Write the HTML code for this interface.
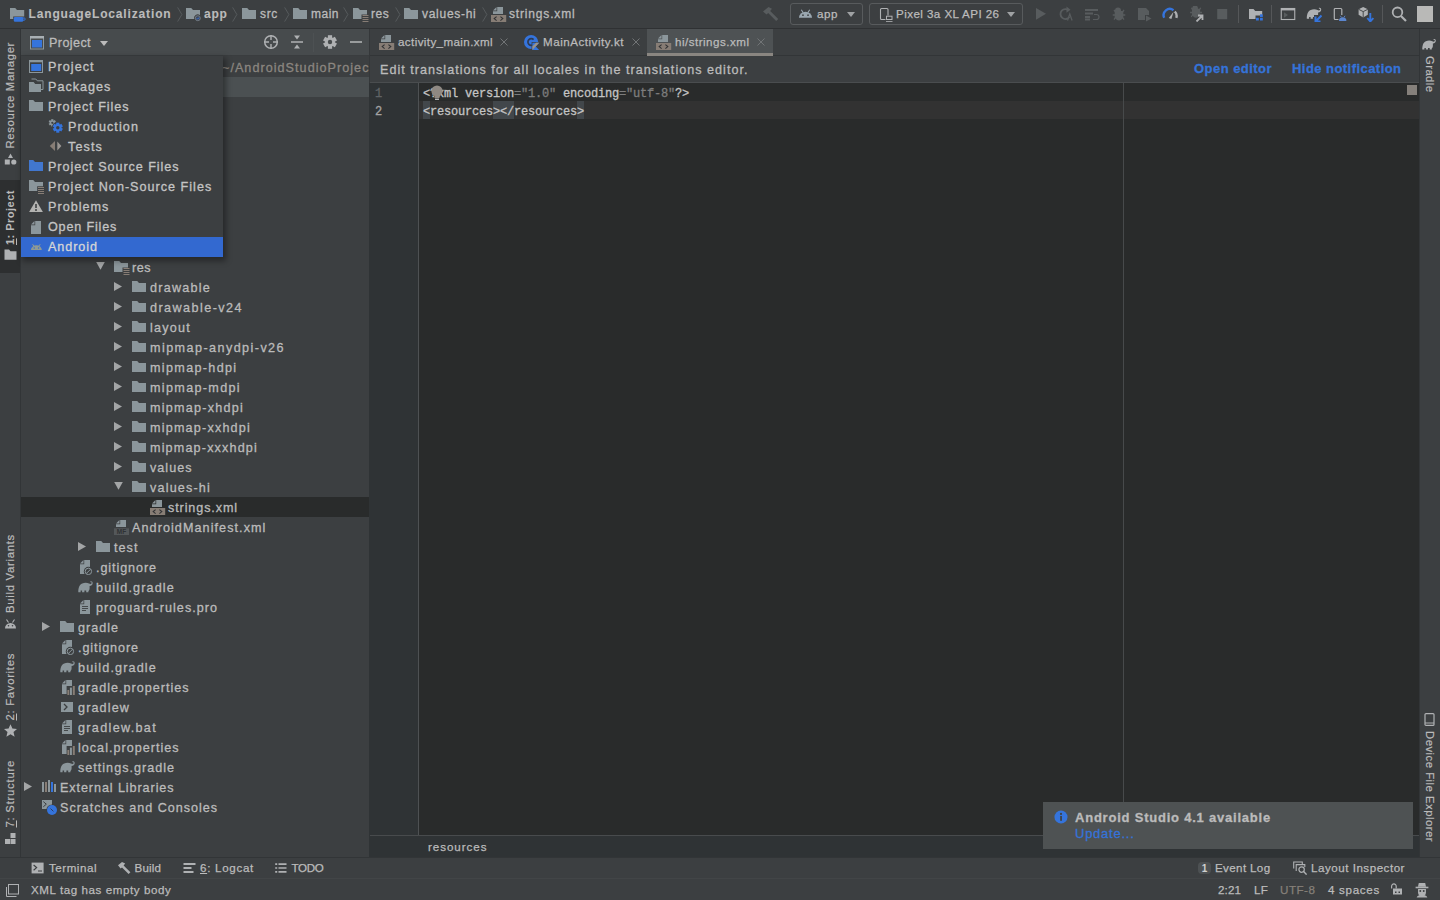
<!DOCTYPE html>
<html><head><meta charset="utf-8"><title>Android Studio</title>
<style>
html,body{margin:0;padding:0}
body{width:1440px;height:900px;overflow:hidden;position:relative;background:#3c3f41;font-family:"Liberation Sans",sans-serif;font-size:14px;color:#bbbbbb}
div,span{box-sizing:border-box}
.abs{position:absolute}
.ic{position:absolute;display:block}
.ic svg{display:block;width:100%;height:100%}
.t{-webkit-text-stroke:0.3px;position:absolute;white-space:nowrap;height:20px;line-height:22px;font-size:12.6px;letter-spacing:0.9px;color:#bbbbbb}
.s{-webkit-text-stroke:0.25px;position:absolute;white-space:nowrap;height:20px;line-height:20px;font-size:11.6px;letter-spacing:0.5px;color:#bbbbbb}
.b{font-weight:bold}
.v{-webkit-text-stroke:0.2px;position:absolute;white-space:nowrap;font-size:11.3px;line-height:20px;color:#bbbbbb}
.code{-webkit-text-stroke:0.3px;position:absolute;white-space:pre;font-family:"Liberation Mono",monospace;font-size:12px;letter-spacing:-0.2px;line-height:18px;height:18px;color:#c4c4c4}
.hl{background:#42474b;display:inline-block;height:18px;margin-top:-2px;padding-top:2px;vertical-align:top}
.dim{color:#7d7d7d}
.link{color:#3574dc}
</style></head>
<body>
<div class="abs" style="left:0;top:0;width:1440px;height:28px;background:#3c3f41"></div>
<div class="abs" style="left:0;top:28px;width:1440px;height:1px;background:#2f3133"></div>
<span class="ic" style="left:10px;top:6px;width:16px;height:16px;"><svg viewBox="0 0 16 16"><path d="M0 2h5.2l1.8 2h7.2v6.5H3.2v2.5H0z" fill="#8b969b"/><rect x="3.8" y="11" width="9.4" height="4.8" rx="1.2" fill="#3574dc"/><rect x="12.2" y="12" width="2.8" height="2.2" rx=".6" fill="none" stroke="#3574dc" stroke-width="1"/></svg></span>
<span class="t b" style="left:28.5px;top:3px;font-size:12px;-webkit-text-stroke:0.1px;letter-spacing:0.849px;">LanguageLocalization</span>
<span class="ic" style="left:186px;top:6px;width:16px;height:16px;"><svg viewBox="0 0 16 16"><path d="M0 2h5.2l1.8 2h7v5.2A3.6 3.6 0 0 0 8.2 13H0z" fill="#8b969b"/><circle cx="11.8" cy="12.2" r="2.5" fill="#3f4a5e" stroke="#7d858b" stroke-width=".8"/><path d="M10.8 12.3l.9.9 1.3-1.7" stroke="#3574dc" stroke-width=".9" fill="none"/></svg></span>
<span class="t b" style="left:204px;top:3px;font-size:12px;-webkit-text-stroke:0.1px;letter-spacing:0.719px;">app</span>
<span class="ic" style="left:242px;top:6px;width:16px;height:16px;"><svg viewBox="0 0 16 16"><path d="M0 2h5.2l1.8 2h7v9H0z" fill="#8b969b"/></svg></span>
<span class="t" style="left:260px;top:3px;font-size:12px;letter-spacing:0.667px;">src</span>
<span class="ic" style="left:293px;top:6px;width:16px;height:16px;"><svg viewBox="0 0 16 16"><path d="M0 2h5.2l1.8 2h7v9H0z" fill="#8b969b"/></svg></span>
<span class="t" style="left:311px;top:3px;font-size:12px;letter-spacing:0.496px;">main</span>
<span class="ic" style="left:353px;top:6px;width:16px;height:16px;"><svg viewBox="0 0 16 16"><path d="M0 2h5.2l1.8 2h7v4.5H8.5V13H0z" fill="#8b969b"/><path d="M9.5 9.5h6M9.5 11.5h6M9.5 13.5h6M9.5 15.5h6" stroke="#877d75" stroke-width="1" fill="none"/></svg></span>
<span class="t" style="left:371px;top:3px;font-size:12px;letter-spacing:0.543px;">res</span>
<span class="ic" style="left:404px;top:6px;width:16px;height:16px;"><svg viewBox="0 0 16 16"><path d="M0 2h5.2l1.8 2h7v9H0z" fill="#8b969b"/></svg></span>
<span class="t" style="left:422px;top:3px;font-size:12px;letter-spacing:0.719px;">values-hi</span>
<span class="ic" style="left:491px;top:6px;width:16px;height:16px;"><svg viewBox="0 0 16 16"><path d="M6.2 1H12V8H2V5.2H6.2z" fill="#8b969b"/><path d="M5.5 1V4.5H2z" fill="#8b969b"/><rect x="0" y="9" width="15.2" height="7.2" fill="#877d75"/><path d="M5.6 10.6L3.2 12.6l2.4 2M9.4 10.6l2.4 2-2.4 2" stroke="#313335" stroke-width="1.1" fill="none"/></svg></span>
<span class="t" style="left:509px;top:3px;font-size:12px;letter-spacing:0.832px;">strings.xml</span>
<span class="ic" style="left:176px;top:5.5px;width:8px;height:17px;"><svg viewBox="0 0 8 18"><path d="M1.5 1.5l4.5 7.5-4.5 7.5" fill="none" stroke="#575b5d" stroke-width="1"/></svg></span>
<span class="ic" style="left:231px;top:5.5px;width:8px;height:17px;"><svg viewBox="0 0 8 18"><path d="M1.5 1.5l4.5 7.5-4.5 7.5" fill="none" stroke="#575b5d" stroke-width="1"/></svg></span>
<span class="ic" style="left:283px;top:5.5px;width:8px;height:17px;"><svg viewBox="0 0 8 18"><path d="M1.5 1.5l4.5 7.5-4.5 7.5" fill="none" stroke="#575b5d" stroke-width="1"/></svg></span>
<span class="ic" style="left:342px;top:5.5px;width:8px;height:17px;"><svg viewBox="0 0 8 18"><path d="M1.5 1.5l4.5 7.5-4.5 7.5" fill="none" stroke="#575b5d" stroke-width="1"/></svg></span>
<span class="ic" style="left:394px;top:5.5px;width:8px;height:17px;"><svg viewBox="0 0 8 18"><path d="M1.5 1.5l4.5 7.5-4.5 7.5" fill="none" stroke="#575b5d" stroke-width="1"/></svg></span>
<span class="ic" style="left:481px;top:5.5px;width:8px;height:17px;"><svg viewBox="0 0 8 18"><path d="M1.5 1.5l4.5 7.5-4.5 7.5" fill="none" stroke="#575b5d" stroke-width="1"/></svg></span>
<div class="abs" style="left:20px;top:29px;width:1px;height:828px;background:#323537"></div>
<div class="abs" style="left:0;top:180px;width:20px;height:93px;background:#2d2f30"></div>
<span class="v" style="left:0px;top:42px;width:20px;height:106.5px;writing-mode:vertical-rl;transform:rotate(180deg);letter-spacing:0.651px">Resource Manager</span>
<span class="ic" style="left:4px;top:153px;width:13px;height:13px;"><svg viewBox="0 0 13 13"><path d="M6.5 0.500L9 5H4z" fill="#afb1b3"/><rect x="0.8" y="6.5" width="5" height="5" fill="#afb1b3"/><circle cx="9.8" cy="9" r="2.6" fill="#afb1b3"/></svg></span>
<span class="v" style="left:0px;top:190px;width:20px;height:55px;writing-mode:vertical-rl;transform:rotate(180deg);font-weight:bold;-webkit-text-stroke:0;font-size:11.2px;letter-spacing:0.4px"><u>1</u>: Project</span>
<span class="ic" style="left:4px;top:248px;width:13px;height:13px;"><svg viewBox="0 0 13 13"><path d="M0.5 1.500h4.500l1.5 1.800h6v8.500h-12z" fill="#afb1b3"/></svg></span>
<span class="v" style="left:0px;top:534px;width:20px;height:79px;writing-mode:vertical-rl;transform:rotate(180deg);letter-spacing:0.723px">Build Variants</span>
<span class="ic" style="left:4px;top:617px;width:13px;height:13px;"><svg viewBox="0 0 13 13"><path d="M1 11.500a5.5 5.5 0 0 1 11 0z" fill="#afb1b3"/><path d="M2.5 2.500l2 3M10.5 2.500l-2 3" stroke="#afb1b3" stroke-width="1.1"/><circle cx="4.5" cy="8.8" r=".8" fill="#3c3f41"/><circle cx="8.5" cy="8.8" r=".8" fill="#3c3f41"/></svg></span>
<span class="v" style="left:0px;top:653px;width:20px;height:67.5px;writing-mode:vertical-rl;transform:rotate(180deg);letter-spacing:0.706px"><u>2</u>: Favorites</span>
<span class="ic" style="left:4px;top:724px;width:13px;height:13px;"><svg viewBox="0 0 13 13"><path d="M6.5 0.300l1.9 4.3 4.6.4-3.5 3.1 1.1 4.6-4.1-2.5-4.1 2.5 1.1-4.600L0 5l4.6-.400z" fill="#afb1b3"/></svg></span>
<span class="v" style="left:0px;top:760px;width:20px;height:67.5px;writing-mode:vertical-rl;transform:rotate(180deg);letter-spacing:0.757px"><u>7</u>: Structure</span>
<span class="ic" style="left:4px;top:832px;width:13px;height:13px;"><svg viewBox="0 0 13 13"><rect x="6.5" y="1" width="5" height="5" fill="#afb1b3"/><rect x="1" y="7" width="5" height="5" fill="#afb1b3"/><rect x="6.5" y="7" width="5" height="5" fill="#afb1b3"/></svg></span>
<span class="ic" style="left:1422px;top:37px;width:15px;height:15px;"><svg viewBox="0 0 16 16"><path d="M0.3 13.3 C0.3 9 1.2 5.5 4.2 4.4 C6.5 3.5 9.5 3.6 11 4.6 C12.2 5.2 13.2 5 13.6 4.2 C13.9 3.5 13.2 3 12.6 3.3 L12.2 2.4 C13.4 1.8 14.9 2.6 14.7 4.2 C14.5 6 13 7 11.6 6.9 L11.6 9.2 C11.6 10.6 11 11.6 10.4 12 L10.4 13.3 L8.2 13.3 L8.2 11.6 L6.4 11.6 L6.4 13.3 L4.1 13.3 L4.1 11.6 L2.6 11.6 L2.6 13.3 Z" fill="#afb1b3"/></svg></span>
<span class="v" style="left:1420px;top:56px;width:20px;height:36.5px;writing-mode:vertical-rl;letter-spacing:0.43px">Gradle</span>
<span class="ic" style="left:1423px;top:713px;width:13px;height:13px;"><svg viewBox="0 0 13 13"><rect x="2" y="0.6" width="9" height="11.8" rx="1" fill="none" stroke="#afb1b3" stroke-width="1.2"/><path d="M2 10h9" stroke="#afb1b3" stroke-width="1"/></svg></span>
<span class="v" style="left:1420px;top:731px;width:20px;height:111px;writing-mode:vertical-rl;letter-spacing:0.496px">Device File Explorer</span>
<span class="ic" style="left:762px;top:6px;width:16px;height:16px;"><svg viewBox="0 0 16 16"><path d="M1 5.500L6.5 1l3.5 1.7-1.8 2.300L16.3 13 14.2 15 6.2 7l-1.7 1.500z" fill="#585c5e"/></svg></span>
<div class="abs" style="left:790px;top:3px;width:73px;height:22px;border:1px solid #585b5d;border-radius:3px"></div>
<span class="ic" style="left:798px;top:7px;width:15px;height:14px;"><svg viewBox="0 1 16 14"><path d="M1 12a7 6.5 0 0 1 14 0z" fill="#9aa7b0"/><path d="M3.5 3.5l2 3M12.5 3.5l-2 3" stroke="#9aa7b0" stroke-width="1.1"/><circle cx="5.3" cy="9.2" r=".9" fill="#3c3f41"/><circle cx="10.7" cy="9.2" r=".9" fill="#3c3f41"/></svg></span>
<span class="s" style="left:817px;top:4px;letter-spacing:0.552px;">app</span>
<div class="abs" style="left:847px;top:12px;width:0;height:0;border-left:4.5px solid transparent;border-right:4.5px solid transparent;border-top:5px solid #9fa2a4"></div>
<div class="abs" style="left:869px;top:3px;width:154px;height:22px;border:1px solid #585b5d;border-radius:3px"></div>
<span class="ic" style="left:878px;top:6px;width:16px;height:16px;"><svg viewBox="0 0 16 16"><rect x="2.5" y="2.5" width="7.5" height="11" rx="1" fill="none" stroke="#afb1b3" stroke-width="1.1"/><rect x="7.5" y="9.5" width="7" height="4.5" fill="#3c3f41"/><rect x="8.5" y="10.2" width="5.5" height="3.3" fill="none" stroke="#afb1b3" stroke-width="1"/><path d="M8 15.700h6.5" stroke="#afb1b3" stroke-width="1"/></svg></span>
<span class="s" style="left:896px;top:4px;letter-spacing:0.438px;">Pixel 3a XL API 26</span>
<div class="abs" style="left:1007px;top:12px;width:0;height:0;border-left:4.5px solid transparent;border-right:4.5px solid transparent;border-top:5px solid #9fa2a4"></div>
<span class="ic" style="left:1033px;top:6px;width:16px;height:16px;"><svg viewBox="0 0 16 16"><path d="M3 2v11.700L13 7.800z" fill="#585c5e"/></svg></span>
<span class="ic" style="left:1058px;top:6px;width:16px;height:16px;"><svg viewBox="0 0 16 16"><path d="M11 4.500A5 5 0 1 0 11.5 11" fill="none" stroke="#585c5e" stroke-width="1.8"/><path d="M8.5 0.500l4 3.3-4 3z" fill="#585c5e"/><path d="M9.5 14.500l2.3-6.5 2.3 6.5" fill="none" stroke="#585c5e" stroke-width="1.3"/></svg></span>
<span class="ic" style="left:1084px;top:6px;width:16px;height:16px;"><svg viewBox="0 0 16 16"><path d="M1 4h13M1 7.500h8M1 11h5M1 13.500h5" stroke="#585c5e" stroke-width="1.8"/><path d="M9 13.500h3.500a2.5 2.5 0 0 0 0-5h-2.5" fill="none" stroke="#585c5e" stroke-width="1.2"/></svg></span>
<span class="ic" style="left:1110px;top:6px;width:16px;height:16px;"><svg viewBox="0 -1 16 16"><path d="M5 3.500a3 3 0 0 1 6 0v.500h1.500l1-1.5 1 .7-1.2 2v2h2v1.500h-2v1.500l1.2 2-1 .7-1-1.500a4 4 0 0 1-7 0l-1 1.5-1-.7 1.2-2v-1.500h-2v-1.500h2v-2l-1.2-2 1-.7 1 1.500H5z" fill="#585c5e"/></svg></span>
<span class="ic" style="left:1136px;top:6px;width:16px;height:16px;"><svg viewBox="0 0 16 16"><path d="M2 2h8l3 3v4H9v5H2z" fill="#585c5e"/><path d="M10 9.500v6l5.5-3z" fill="#585c5e"/></svg></span>
<span class="ic" style="left:1162px;top:6px;width:16px;height:16px;"><svg viewBox="0 0 16 16"><path d="M2.2 11.800A6.2 6.2 0 0 1 11.5 4.2" fill="none" stroke="#3574dc" stroke-width="2.4"/><path d="M12.8 5.500a6.2 6.2 0 0 1 1.5 6.3" fill="none" stroke="#afb1b3" stroke-width="2.4"/><path d="M6.8 12l4.8-6.3-2.2 7.300z" fill="#afb1b3"/></svg></span>
<span class="ic" style="left:1189px;top:6px;width:16px;height:16px;"><svg viewBox="0 0 16 16"><path d="M5 3.500a3 3 0 0 1 6 0v.500h1.500l1-1.5 1 .7-1.2 2v2h2v1.500h-2v1.500l1.2 2-1 .7-1-1.500a4 4 0 0 1-7 0l-1 1.5-1-.7 1.2-2v-1.500h-2v-1.500h2v-2l-1.2-2 1-.7 1 1.500H5z" fill="#585c5e" transform="translate(-1.5 -1) scale(.95)"/><path d="M7.5 15.500l5-5M9 9.500h4.500v4.5" stroke="#afb1b3" stroke-width="1.8" fill="none"/></svg></span>
<span class="ic" style="left:1215px;top:6px;width:16px;height:16px;"><svg viewBox="0 0 16 16"><rect x="2.2" y="3" width="10" height="10.2" fill="#585c5e"/></svg></span>
<span class="ic" style="left:1248px;top:6px;width:16px;height:16px;"><svg viewBox="0 0 16 16"><path d="M1 3h4.500l1.7 2h7v4.500H7.500V13H1z" fill="#afb1b3"/><rect x="12" y="8.3" width="2.8" height="2.7" fill="#3574dc"/><rect x="8" y="11.8" width="2.8" height="2.7" fill="#3574dc"/><rect x="12" y="11.8" width="2.8" height="2.7" fill="#3574dc"/></svg></span>
<span class="ic" style="left:1280px;top:6px;width:16px;height:16px;"><svg viewBox="0 0 16 16"><rect x="1.25" y="2.5" width="13.5" height="11" fill="none" stroke="#afb1b3" stroke-width="1.1"/><rect x="1" y="2" width="14" height="2.4" fill="#afb1b3"/><path d="M4 6.300v5.400l4-2.700z" fill="#585c5e"/></svg></span>
<span class="ic" style="left:1306px;top:6px;width:16px;height:16px;"><svg viewBox="0 0 16 16"><path d="M0.3 13.3 C0.3 9 1.2 5.5 4.2 4.4 C6.5 3.5 9.5 3.6 11 4.6 C12.2 5.2 13.2 5 13.6 4.2 C13.9 3.5 13.2 3 12.6 3.3 L12.2 2.4 C13.4 1.8 14.9 2.6 14.7 4.2 C14.5 6 13 7 11.6 6.9 L11.6 9.2 C11.6 10.6 11 11.6 10.4 12 L10.4 13.3 L8.2 13.3 L8.2 11.6 L6.4 11.6 L6.4 13.3 L4.1 13.3 L4.1 11.6 L2.6 11.6 L2.6 13.3 Z" fill="#afb1b3" transform="translate(.5 -.5)"/><path d="M8 9h9v8H8z" fill="#3c3f41"/><path d="M15.5 9.500l-5 5M9.5 10.500v5h5" stroke="#3574dc" stroke-width="2" fill="none"/></svg></span>
<span class="ic" style="left:1332px;top:6px;width:16px;height:16px;"><svg viewBox="0 0 16 16"><rect x="2.3" y="2.5" width="7.5" height="11" rx="1" fill="none" stroke="#afb1b3" stroke-width="1.2"/><rect x="6.5" y="9" width="9" height="7" fill="#3c3f41"/><path d="M7 15a3.7 3.7 0 0 1 7.4 0z" fill="#5b86cf"/><path d="M8.3 9.800l1 1.500M13 9.800l-1 1.5" stroke="#5b86cf" stroke-width=".9"/></svg></span>
<span class="ic" style="left:1358px;top:6px;width:16px;height:16px;"><svg viewBox="0 0 16 16"><path d="M5.2 1l4.6 2.300v5.400L5.2 11.5.6 8.700V3.300z" fill="#afb1b3"/><path d="M.6 3.300l4.6 2.3 4.6-2.300M5.2 5.600v5.9" stroke="#3c3f41" stroke-width=".9" fill="none"/><path d="M12.3 7v7.500M9.3 12l3 3.5 3-3.5" stroke="#3574dc" stroke-width="1.9" fill="none"/></svg></span>
<span class="ic" style="left:1391px;top:6px;width:16px;height:16px;"><svg viewBox="0 0 16 16"><circle cx="6.5" cy="6.3" r="4.8" fill="none" stroke="#afb1b3" stroke-width="1.8"/><path d="M10 10l5 5" stroke="#afb1b3" stroke-width="2.2"/></svg></span>
<div class="abs" style="left:1238px;top:5px;width:1px;height:18px;background:#555759"></div>
<div class="abs" style="left:1271px;top:5px;width:1px;height:18px;background:#555759"></div>
<div class="abs" style="left:1382px;top:5px;width:1px;height:18px;background:#555759"></div>
<div class="abs" style="left:1417px;top:6px;width:16px;height:16px;background:#b9b9b7"></div>
<div class="abs" style="left:21px;top:29px;width:348px;height:26px;background:#474b4d"></div>
<div class="abs" style="left:21px;top:55px;width:348px;height:1px;background:#3a3d3f"></div>
<span class="ic" style="left:29px;top:35px;width:16px;height:16px;"><svg viewBox="0 0 16 16"><rect x="1.5" y="1.5" width="13" height="12.5" fill="none" stroke="#8b969b" stroke-width="1"/><rect x="1" y="1" width="14" height="2.5" fill="#a9b0b4"/><rect x="3" y="5" width="10" height="7.5" fill="#3574dc"/></svg></span>
<span class="t" style="left:49px;top:32px;letter-spacing:0.4px;">Project</span>
<div class="abs" style="left:100px;top:41px;width:0;height:0;border-left:4.5px solid transparent;border-right:4.5px solid transparent;border-top:5px solid #bbbbbb"></div>
<span class="ic" style="left:263px;top:34px;width:16px;height:16px;"><svg viewBox="0 0 16 16"><circle cx="8" cy="8" r="6.3" fill="none" stroke="#afb1b3" stroke-width="1.5"/><path d="M8 1v5M8 10v5M1 8h5M10 8h5" stroke="#afb1b3" stroke-width="1.4"/></svg></span>
<span class="ic" style="left:289px;top:34px;width:16px;height:16px;"><svg viewBox="0 0 16 16"><path d="M2 8h12" stroke="#afb1b3" stroke-width="1.5"/><path d="M5 1.5h6L8 5.5zM5 14.5h6L8 10.5z" fill="#afb1b3"/></svg></span>
<span class="ic" style="left:322px;top:34px;width:16px;height:16px;"><svg viewBox="0 0 16 16"><rect x="5.89" y="1.20" width="4.22" height="13.60" fill="#afb1b3" transform="rotate(0.0 8 8)"/><rect x="5.89" y="1.20" width="4.22" height="13.60" fill="#afb1b3" transform="rotate(60.0 8 8)"/><rect x="5.89" y="1.20" width="4.22" height="13.60" fill="#afb1b3" transform="rotate(120.0 8 8)"/><circle cx="8" cy="8" r="4.9" fill="#afb1b3"/><circle cx="8" cy="8" r="2.2" fill="#474b4d"/></svg></span>
<span class="ic" style="left:348px;top:34px;width:16px;height:16px;"><svg viewBox="0 0 16 16"><path d="M2 8h12" stroke="#afb1b3" stroke-width="1.6"/></svg></span>
<div class="abs" style="left:313px;top:33px;width:1px;height:19px;background:#4d5153"></div>
<div class="abs" style="left:21px;top:77px;width:348px;height:20px;background:#4b5052"></div>
<span class="t" style="left:222px;top:57px;color:#8b8680;letter-spacing:1.039px;">~/AndroidStudioProjec</span>
<div class="abs" style="left:21px;top:497px;width:348px;height:20px;background:#292b2b"></div>
<span class="ic" style="left:114px;top:259px;width:16px;height:16px;"><svg viewBox="0 0 16 16"><path d="M0 2h5.2l1.8 2h7v4.5H8.5V13H0z" fill="#8b969b"/><path d="M9.5 9.5h6M9.5 11.5h6M9.5 13.5h6M9.5 15.5h6" stroke="#877d75" stroke-width="1" fill="none"/></svg></span>
<span class="ic" style="left:94px;top:261px;width:12px;height:12px;"><svg viewBox="0 0 12 12"><path d="M2.2 1h8.6l-4.3 7.8z" fill="#a3a5a6"/></svg></span>
<span class="t" style="left:132px;top:257px;letter-spacing:0.5px;">res</span>
<span class="ic" style="left:132px;top:279px;width:16px;height:16px;"><svg viewBox="0 0 16 16"><path d="M0 2h5.2l1.8 2h7v9H0z" fill="#8b969b"/></svg></span>
<span class="ic" style="left:112px;top:281px;width:12px;height:12px;"><svg viewBox="0 0 12 12"><path d="M2 1l8 4.5-8 4.5z" fill="#a3a5a6"/></svg></span>
<span class="t" style="left:150px;top:277px;letter-spacing:1.236px;">drawable</span>
<span class="ic" style="left:132px;top:299px;width:16px;height:16px;"><svg viewBox="0 0 16 16"><path d="M0 2h5.2l1.8 2h7v9H0z" fill="#8b969b"/></svg></span>
<span class="ic" style="left:112px;top:301px;width:12px;height:12px;"><svg viewBox="0 0 12 12"><path d="M2 1l8 4.5-8 4.5z" fill="#a3a5a6"/></svg></span>
<span class="t" style="left:150px;top:297px;letter-spacing:1.449px;">drawable-v24</span>
<span class="ic" style="left:132px;top:319px;width:16px;height:16px;"><svg viewBox="0 0 16 16"><path d="M0 2h5.2l1.8 2h7v9H0z" fill="#8b969b"/></svg></span>
<span class="ic" style="left:112px;top:321px;width:12px;height:12px;"><svg viewBox="0 0 12 12"><path d="M2 1l8 4.5-8 4.5z" fill="#a3a5a6"/></svg></span>
<span class="t" style="left:150px;top:317px;letter-spacing:1.232px;">layout</span>
<span class="ic" style="left:132px;top:339px;width:16px;height:16px;"><svg viewBox="0 0 16 16"><path d="M0 2h5.2l1.8 2h7v9H0z" fill="#8b969b"/></svg></span>
<span class="ic" style="left:112px;top:341px;width:12px;height:12px;"><svg viewBox="0 0 12 12"><path d="M2 1l8 4.5-8 4.5z" fill="#a3a5a6"/></svg></span>
<span class="t" style="left:150px;top:337px;letter-spacing:1.435px;">mipmap-anydpi-v26</span>
<span class="ic" style="left:132px;top:359px;width:16px;height:16px;"><svg viewBox="0 0 16 16"><path d="M0 2h5.2l1.8 2h7v9H0z" fill="#8b969b"/></svg></span>
<span class="ic" style="left:112px;top:361px;width:12px;height:12px;"><svg viewBox="0 0 12 12"><path d="M2 1l8 4.5-8 4.5z" fill="#a3a5a6"/></svg></span>
<span class="t" style="left:150px;top:357px;letter-spacing:1.337px;">mipmap-hdpi</span>
<span class="ic" style="left:132px;top:379px;width:16px;height:16px;"><svg viewBox="0 0 16 16"><path d="M0 2h5.2l1.8 2h7v9H0z" fill="#8b969b"/></svg></span>
<span class="ic" style="left:112px;top:381px;width:12px;height:12px;"><svg viewBox="0 0 12 12"><path d="M2 1l8 4.5-8 4.5z" fill="#a3a5a6"/></svg></span>
<span class="t" style="left:150px;top:377px;letter-spacing:1.337px;">mipmap-mdpi</span>
<span class="ic" style="left:132px;top:399px;width:16px;height:16px;"><svg viewBox="0 0 16 16"><path d="M0 2h5.2l1.8 2h7v9H0z" fill="#8b969b"/></svg></span>
<span class="ic" style="left:112px;top:401px;width:12px;height:12px;"><svg viewBox="0 0 12 12"><path d="M2 1l8 4.5-8 4.5z" fill="#a3a5a6"/></svg></span>
<span class="t" style="left:150px;top:397px;letter-spacing:1.242px;">mipmap-xhdpi</span>
<span class="ic" style="left:132px;top:419px;width:16px;height:16px;"><svg viewBox="0 0 16 16"><path d="M0 2h5.2l1.8 2h7v9H0z" fill="#8b969b"/></svg></span>
<span class="ic" style="left:112px;top:421px;width:12px;height:12px;"><svg viewBox="0 0 12 12"><path d="M2 1l8 4.5-8 4.5z" fill="#a3a5a6"/></svg></span>
<span class="t" style="left:150px;top:417px;letter-spacing:1.201px;">mipmap-xxhdpi</span>
<span class="ic" style="left:132px;top:439px;width:16px;height:16px;"><svg viewBox="0 0 16 16"><path d="M0 2h5.2l1.8 2h7v9H0z" fill="#8b969b"/></svg></span>
<span class="ic" style="left:112px;top:441px;width:12px;height:12px;"><svg viewBox="0 0 12 12"><path d="M2 1l8 4.5-8 4.5z" fill="#a3a5a6"/></svg></span>
<span class="t" style="left:150px;top:437px;letter-spacing:1.165px;">mipmap-xxxhdpi</span>
<span class="ic" style="left:132px;top:459px;width:16px;height:16px;"><svg viewBox="0 0 16 16"><path d="M0 2h5.2l1.8 2h7v9H0z" fill="#8b969b"/></svg></span>
<span class="ic" style="left:112px;top:461px;width:12px;height:12px;"><svg viewBox="0 0 12 12"><path d="M2 1l8 4.5-8 4.5z" fill="#a3a5a6"/></svg></span>
<span class="t" style="left:150px;top:457px;letter-spacing:1.016px;">values</span>
<span class="ic" style="left:132px;top:479px;width:16px;height:16px;"><svg viewBox="0 0 16 16"><path d="M0 2h5.2l1.8 2h7v9H0z" fill="#8b969b"/></svg></span>
<span class="ic" style="left:112px;top:481px;width:12px;height:12px;"><svg viewBox="0 0 12 12"><path d="M2.2 1h8.6l-4.3 7.8z" fill="#a3a5a6"/></svg></span>
<span class="t" style="left:150px;top:477px;letter-spacing:1.177px;">values-hi</span>
<span class="ic" style="left:150px;top:499px;width:16px;height:16px;"><svg viewBox="0 0 16 16"><path d="M6.2 1H12V8H2V5.2H6.2z" fill="#8b969b"/><path d="M5.5 1V4.5H2z" fill="#8b969b"/><rect x="0" y="9" width="15.2" height="7.2" fill="#877d75"/><path d="M5.6 10.6L3.2 12.6l2.4 2M9.4 10.6l2.4 2-2.4 2" stroke="#313335" stroke-width="1.1" fill="none"/></svg></span>
<span class="t" style="left:168px;top:497px;letter-spacing:0.892px;">strings.xml</span>
<span class="ic" style="left:114px;top:519px;width:16px;height:16px;"><svg viewBox="0 0 16 16"><path d="M6.2 1H12V8H2V5.2H6.2z" fill="#8b969b"/><path d="M5.5 1V4.5H2z" fill="#8b969b"/><rect x="0" y="9.3" width="15" height="7" fill="#54585a"/><text x="7.5" y="15.2" font-family="Liberation Sans,sans-serif" font-size="6.5" font-weight="bold" text-anchor="middle" fill="#2f3234">MF</text></svg></span>
<span class="t" style="left:132px;top:517px;letter-spacing:1.074px;">AndroidManifest.xml</span>
<span class="ic" style="left:96px;top:539px;width:16px;height:16px;"><svg viewBox="0 0 16 16"><path d="M0 2h5.2l1.8 2h7v9H0z" fill="#8b969b"/></svg></span>
<span class="ic" style="left:76px;top:541px;width:12px;height:12px;"><svg viewBox="0 0 12 12"><path d="M2 1l8 4.5-8 4.5z" fill="#a3a5a6"/></svg></span>
<span class="t" style="left:114px;top:537px;letter-spacing:1.047px;">test</span>
<span class="ic" style="left:78px;top:559px;width:16px;height:16px;"><svg viewBox="0 0 16 16"><path d="M6.2 1H12V15H2V5.2H6.2z" fill="#8b969b"/><path d="M5.5 1V4.5H2z" fill="#8b969b"/><circle cx="10.4" cy="12.4" r="4.6" fill="#3c3f41"/><circle cx="10.4" cy="12.4" r="3.2" fill="none" stroke="#8b969b" stroke-width="1"/><path d="M8.3 14.5l4.2-4.2" stroke="#8b969b" stroke-width="1"/></svg></span>
<span class="t" style="left:96px;top:557px;letter-spacing:0.919px;">.gitignore</span>
<span class="ic" style="left:78px;top:579px;width:16px;height:16px;"><svg viewBox="0 0 16 16"><path d="M0.3 13.3 C0.3 9 1.2 5.5 4.2 4.4 C6.5 3.5 9.5 3.6 11 4.6 C12.2 5.2 13.2 5 13.6 4.2 C13.9 3.5 13.2 3 12.6 3.3 L12.2 2.4 C13.4 1.8 14.9 2.6 14.7 4.2 C14.5 6 13 7 11.6 6.9 L11.6 9.2 C11.6 10.6 11 11.6 10.4 12 L10.4 13.3 L8.2 13.3 L8.2 11.6 L6.4 11.6 L6.4 13.3 L4.1 13.3 L4.1 11.6 L2.6 11.6 L2.6 13.3 Z" fill="#8b969b"/></svg></span>
<span class="t" style="left:96px;top:577px;letter-spacing:1.156px;">build.gradle</span>
<span class="ic" style="left:78px;top:599px;width:16px;height:16px;"><svg viewBox="0 0 16 16"><path d="M6.2 1H12V15H2V5.2H6.2z" fill="#8b969b"/><path d="M5.5 1V4.5H2z" fill="#8b969b"/><path d="M4 7.5h6M4 9.5h6M4 11.5h4" stroke="#45494b" stroke-width="1" fill="none"/></svg></span>
<span class="t" style="left:96px;top:597px;letter-spacing:1.022px;">proguard-rules.pro</span>
<span class="ic" style="left:60px;top:619px;width:16px;height:16px;"><svg viewBox="0 0 16 16"><path d="M0 2h5.2l1.8 2h7v9H0z" fill="#8b969b"/></svg></span>
<span class="ic" style="left:40px;top:621px;width:12px;height:12px;"><svg viewBox="0 0 12 12"><path d="M2 1l8 4.5-8 4.5z" fill="#a3a5a6"/></svg></span>
<span class="t" style="left:78px;top:617px;letter-spacing:0.997px;">gradle</span>
<span class="ic" style="left:60px;top:639px;width:16px;height:16px;"><svg viewBox="0 0 16 16"><path d="M6.2 1H12V15H2V5.2H6.2z" fill="#8b969b"/><path d="M5.5 1V4.5H2z" fill="#8b969b"/><circle cx="10.4" cy="12.4" r="4.6" fill="#3c3f41"/><circle cx="10.4" cy="12.4" r="3.2" fill="none" stroke="#8b969b" stroke-width="1"/><path d="M8.3 14.5l4.2-4.2" stroke="#8b969b" stroke-width="1"/></svg></span>
<span class="t" style="left:78px;top:637px;letter-spacing:0.919px;">.gitignore</span>
<span class="ic" style="left:60px;top:659px;width:16px;height:16px;"><svg viewBox="0 0 16 16"><path d="M0.3 13.3 C0.3 9 1.2 5.5 4.2 4.4 C6.5 3.5 9.5 3.6 11 4.6 C12.2 5.2 13.2 5 13.6 4.2 C13.9 3.5 13.2 3 12.6 3.3 L12.2 2.4 C13.4 1.8 14.9 2.6 14.7 4.2 C14.5 6 13 7 11.6 6.9 L11.6 9.2 C11.6 10.6 11 11.6 10.4 12 L10.4 13.3 L8.2 13.3 L8.2 11.6 L6.4 11.6 L6.4 13.3 L4.1 13.3 L4.1 11.6 L2.6 11.6 L2.6 13.3 Z" fill="#8b969b"/></svg></span>
<span class="t" style="left:78px;top:657px;letter-spacing:1.156px;">build.gradle</span>
<span class="ic" style="left:60px;top:679px;width:16px;height:16px;"><svg viewBox="0 0 16 16"><path d="M6.2 1H12V15H2V5.2H6.2z" fill="#8b969b"/><path d="M5.5 1V4.5H2z" fill="#8b969b"/><rect x="6.6" y="7" width="6" height="9" fill="#3c3f41"/><rect x="7.4" y="11" width="1.8" height="5" fill="#877d75"/><rect x="9.9" y="8.6" width="2" height="7.4" fill="#8b969b"/><rect x="12.8" y="7" width="2" height="9" fill="#877d75"/></svg></span>
<span class="t" style="left:78px;top:677px;letter-spacing:0.999px;">gradle.properties</span>
<span class="ic" style="left:60px;top:699px;width:16px;height:16px;"><svg viewBox="0 0 16 16"><rect x="1" y="3" width="12" height="10" fill="#8b969b"/><path d="M4 5l3 3-3 3" stroke="#3c3f41" stroke-width="1.3" fill="none"/></svg></span>
<span class="t" style="left:78px;top:697px;letter-spacing:1.127px;">gradlew</span>
<span class="ic" style="left:60px;top:719px;width:16px;height:16px;"><svg viewBox="0 0 16 16"><path d="M6.2 1H12V15H2V5.2H6.2z" fill="#8b969b"/><path d="M5.5 1V4.5H2z" fill="#8b969b"/><path d="M4 7.5h6M4 9.5h6M4 11.5h4" stroke="#45494b" stroke-width="1" fill="none"/></svg></span>
<span class="t" style="left:78px;top:717px;letter-spacing:1.325px;">gradlew.bat</span>
<span class="ic" style="left:60px;top:739px;width:16px;height:16px;"><svg viewBox="0 0 16 16"><path d="M6.2 1H12V15H2V5.2H6.2z" fill="#8b969b"/><path d="M5.5 1V4.5H2z" fill="#8b969b"/><rect x="6.6" y="7" width="6" height="9" fill="#3c3f41"/><rect x="7.4" y="11" width="1.8" height="5" fill="#877d75"/><rect x="9.9" y="8.6" width="2" height="7.4" fill="#8b969b"/><rect x="12.8" y="7" width="2" height="9" fill="#877d75"/></svg></span>
<span class="t" style="left:78px;top:737px;letter-spacing:1.006px;">local.properties</span>
<span class="ic" style="left:60px;top:759px;width:16px;height:16px;"><svg viewBox="0 0 16 16"><path d="M0.3 13.3 C0.3 9 1.2 5.5 4.2 4.4 C6.5 3.5 9.5 3.6 11 4.6 C12.2 5.2 13.2 5 13.6 4.2 C13.9 3.5 13.2 3 12.6 3.3 L12.2 2.4 C13.4 1.8 14.9 2.6 14.7 4.2 C14.5 6 13 7 11.6 6.9 L11.6 9.2 C11.6 10.6 11 11.6 10.4 12 L10.4 13.3 L8.2 13.3 L8.2 11.6 L6.4 11.6 L6.4 13.3 L4.1 13.3 L4.1 11.6 L2.6 11.6 L2.6 13.3 Z" fill="#8b969b"/></svg></span>
<span class="t" style="left:78px;top:757px;letter-spacing:1.005px;">settings.gradle</span>
<span class="ic" style="left:42px;top:779px;width:16px;height:16px;"><svg viewBox="0 0 16 16"><rect x="0" y="3" width="2" height="10" fill="#8b969b"/><rect x="3" y="3" width="2" height="10" fill="#877d75"/><rect x="6" y="1" width="2" height="12" fill="#8b969b"/><rect x="9" y="3" width="2" height="10" fill="#3574dc"/><rect x="12" y="5" width="2" height="8" fill="#8b969b"/></svg></span>
<span class="ic" style="left:22px;top:781px;width:12px;height:12px;"><svg viewBox="0 0 12 12"><path d="M2 1l8 4.5-8 4.5z" fill="#a3a5a6"/></svg></span>
<span class="t" style="left:60px;top:777px;letter-spacing:0.917px;">External Libraries</span>
<span class="ic" style="left:42px;top:799px;width:16px;height:16px;"><svg viewBox="0 0 16 16"><rect x="0" y="1" width="10" height="9" fill="#8b969b"/><path d="M1.3 2.6l3 2.6-3 2.6" stroke="#3c3f41" stroke-width="1" fill="none"/><circle cx="10" cy="11" r="5.6" fill="#3c3f41"/><circle cx="10" cy="11" r="5" fill="#3574dc"/><path d="M8.6 9.6l2.8 2.8" stroke="#2b3f66" stroke-width="1"/></svg></span>
<span class="t" style="left:60px;top:797px;letter-spacing:0.977px;">Scratches and Consoles</span>
<div class="abs" style="left:21px;top:56px;width:202px;height:201px;background:#3c3f41;box-shadow:2px 3px 6px 1px rgba(0,0,0,.38)"></div>
<div class="abs" style="left:21px;top:237px;width:202px;height:20px;background:#3369d0"></div>
<span class="ic" style="left:28px;top:58px;width:16px;height:16px;"><svg viewBox="0 0 16 16"><rect x="1.5" y="2.5" width="13" height="12" fill="none" stroke="#8b969b" stroke-width="1"/><rect x="1" y="2" width="14" height="2.3" fill="#8b969b"/><rect x="3.2" y="6" width="10" height="7" fill="#3574dc"/></svg></span>
<span class="t" style="left:48px;top:56px;color:#c4c4c4;letter-spacing:1.071px;">Project</span>
<span class="ic" style="left:28px;top:78px;width:16px;height:16px;"><svg viewBox="0 0 16 16"><path d="M3.5 1h4.3l1.5 1.8h5.7v8.7h-2" fill="none" stroke="#8b969b" stroke-width="1"/><path d="M1 4h4.6l1.6 2h5.8v8H1z" fill="#8b969b"/></svg></span>
<span class="t" style="left:48px;top:76px;color:#c4c4c4;letter-spacing:1.011px;">Packages</span>
<span class="ic" style="left:28px;top:98px;width:16px;height:16px;"><svg viewBox="0 0 16 16"><path d="M1 2h4.2l1.8 2h8v9H1z" fill="#8b969b"/></svg></span>
<span class="t" style="left:48px;top:96px;color:#c4c4c4;letter-spacing:0.931px;">Project Files</span>
<span class="ic" style="left:48px;top:118px;width:16px;height:16px;"><svg viewBox="0 0 16 16"><rect x="3.18" y="1.20" width="2.23" height="7.20" fill="#8b969b" transform="rotate(0.0 4.3 4.8)"/><rect x="3.18" y="1.20" width="2.23" height="7.20" fill="#8b969b" transform="rotate(60.0 4.3 4.8)"/><rect x="3.18" y="1.20" width="2.23" height="7.20" fill="#8b969b" transform="rotate(120.0 4.3 4.8)"/><circle cx="4.3" cy="4.8" r="2.4" fill="#8b969b"/><circle cx="4.3" cy="4.8" r="1.1" fill="#3c3f41"/><circle cx="9.8" cy="9.7" r="6" fill="#3c3f41"/><rect x="8.25" y="4.70" width="3.10" height="10.00" fill="#3574dc" transform="rotate(0.0 9.8 9.7)"/><rect x="8.25" y="4.70" width="3.10" height="10.00" fill="#3574dc" transform="rotate(60.0 9.8 9.7)"/><rect x="8.25" y="4.70" width="3.10" height="10.00" fill="#3574dc" transform="rotate(120.0 9.8 9.7)"/><circle cx="9.8" cy="9.7" r="3.6" fill="#3574dc"/><circle cx="9.8" cy="9.7" r="1.7" fill="#3c3f41"/></svg></span>
<span class="t" style="left:68px;top:116px;color:#c4c4c4;letter-spacing:1.078px;">Production</span>
<span class="ic" style="left:48px;top:138px;width:16px;height:16px;"><svg viewBox="0 0 16 16"><path d="M7 3v10L1.8 8z" fill="#877d75"/><path d="M9.3 3.5v9L13.4 8z" fill="#9a9692"/></svg></span>
<span class="t" style="left:68px;top:136px;color:#c4c4c4;letter-spacing:1.119px;">Tests</span>
<span class="ic" style="left:28px;top:158px;width:16px;height:16px;"><svg viewBox="0 0 16 16"><path d="M1 2h4.2l1.8 2h8v9H1z" fill="#4177cf"/></svg></span>
<span class="t" style="left:48px;top:156px;color:#c4c4c4;letter-spacing:0.936px;">Project Source Files</span>
<span class="ic" style="left:28px;top:178px;width:16px;height:16px;"><svg viewBox="0 0 16 16"><path d="M1 2h4.2l1.8 2h8v4.2H9.2V13H1z" fill="#8b969b"/><path d="M10 9.5h6M10 11.5h6M10 13.5h6M10 15.5h6" stroke="#877d75" stroke-width="1" fill="none"/></svg></span>
<span class="t" style="left:48px;top:176px;color:#c4c4c4;letter-spacing:1.009px;">Project Non-Source Files</span>
<span class="ic" style="left:28px;top:198px;width:16px;height:16px;"><svg viewBox="0 0 16 16"><path d="M8 2.2L14.9 14H1.1z" fill="#b3b3b1"/><path d="M8 6v4" stroke="#3c3f41" stroke-width="1.6"/><circle cx="8" cy="12" r="1" fill="#3c3f41"/></svg></span>
<span class="t" style="left:48px;top:196px;color:#c4c4c4;letter-spacing:1.025px;">Problems</span>
<span class="ic" style="left:28px;top:218px;width:16px;height:16px;"><svg viewBox="0 0 16 16"><path d="M7.2 3H13V17H3V7.2H7.2z" fill="#8b969b"/><path d="M6.5 3V6.5H3z" fill="#8b969b"/></svg></span>
<span class="t" style="left:48px;top:216px;color:#c4c4c4;letter-spacing:0.829px;">Open Files</span>
<span class="ic" style="left:28px;top:238px;width:16px;height:16px;"><svg viewBox="0 0 16 16"><path d="M3 12a5.4 4.7 0 0 1 10.8 0z" fill="#8f9a94"/><path d="M4.6 6.2l1.500 2.2M12.2 6.2l-1.500 2.2" stroke="#8f9a94" stroke-width="1"/><circle cx="6.2" cy="10" r=".7" fill="#3369d0"/><circle cx="10.6" cy="10" r=".7" fill="#3369d0"/></svg></span>
<span class="t" style="left:48px;top:236px;color:#d6d6d6;letter-spacing:0.94px;">Android</span>
<div class="abs" style="left:369px;top:29px;width:1px;height:828px;background:#35383a"></div>
<div class="abs" style="left:370px;top:29px;width:1049px;height:27px;background:#3c3f41"></div>
<div class="abs" style="left:370px;top:55px;width:1049px;height:1px;background:#323537"></div>
<div class="abs" style="left:647px;top:29px;width:126px;height:27px;background:#4e5254"></div>
<div class="abs" style="left:647px;top:53px;width:126px;height:3px;background:#8a8681"></div>
<span class="ic" style="left:379px;top:34px;width:16px;height:16px;"><svg viewBox="0 0 16 16"><path d="M6.2 1H12V8H2V5.2H6.2z" fill="#8b969b"/><path d="M5.5 1V4.5H2z" fill="#8b969b"/><rect x="0" y="9" width="15.2" height="7.2" fill="#877d75"/><path d="M5.6 10.6L3.2 12.6l2.4 2M9.4 10.6l2.4 2-2.4 2" stroke="#313335" stroke-width="1.1" fill="none"/></svg></span>
<span class="s" style="left:398px;top:32px;letter-spacing:0.396px;">activity_main.xml</span>
<span class="ic" style="left:500px;top:38px;width:8px;height:8px;"><svg viewBox="0 0 8 8"><path d="M0.5 0.5l7 7M7.5 0.5l-7 7" stroke="#717476" stroke-width="1" fill="none"/></svg></span>
<span class="ic" style="left:524px;top:34px;width:16px;height:16px;"><svg viewBox="0 0 16 16"><circle cx="7.1" cy="8" r="7.1" fill="#3574dc"/><path d="M9.6 5.7A3.3 3.3 0 1 0 9.6 10.3" fill="none" stroke="#2d3a55" stroke-width="1.7"/><rect x="7.6" y="8" width="9" height="9" fill="#3c3f41"/><path d="M8.4 8.8H15.2L11.8 12.4L15.2 16H8.4z" fill="#3574dc"/><path d="M12 8.8H15.2L8.4 16V12.6z" fill="#9b9288"/></svg></span>
<span class="s" style="left:543px;top:32px;letter-spacing:0.518px;">MainActivity.kt</span>
<span class="ic" style="left:632px;top:38px;width:8px;height:8px;"><svg viewBox="0 0 8 8"><path d="M0.5 0.5l7 7M7.5 0.5l-7 7" stroke="#717476" stroke-width="1" fill="none"/></svg></span>
<span class="ic" style="left:656px;top:34px;width:16px;height:16px;"><svg viewBox="0 0 16 16"><path d="M6.2 1H12V8H2V5.2H6.2z" fill="#8b969b"/><path d="M5.5 1V4.5H2z" fill="#8b969b"/><rect x="0" y="9" width="15.2" height="7.2" fill="#877d75"/><path d="M5.6 10.6L3.2 12.6l2.4 2M9.4 10.6l2.4 2-2.4 2" stroke="#313335" stroke-width="1.1" fill="none"/></svg></span>
<span class="s" style="left:675px;top:32px;letter-spacing:0.489px;">hi/strings.xml</span>
<span class="ic" style="left:757px;top:38px;width:8px;height:8px;"><svg viewBox="0 0 8 8"><path d="M0.5 0.5l7 7M7.5 0.5l-7 7" stroke="#717476" stroke-width="1" fill="none"/></svg></span>
<div class="abs" style="left:370px;top:56px;width:1049px;height:26px;background:#3c3f41"></div>
<div class="abs" style="left:370px;top:82px;width:1049px;height:1px;background:#4a4d4f"></div>
<span class="t" style="left:380px;top:59px;letter-spacing:1.014px;">Edit translations for all locales in the translations editor.</span>
<span class="t b" style="left:1194px;top:58px;color:#3573d9;font-size:13px;letter-spacing:0.459px;">Open editor</span>
<span class="t b" style="left:1292px;top:58px;color:#3573d9;font-size:13px;letter-spacing:0.45px;">Hide notification</span>
<div class="abs" style="left:370px;top:83px;width:1049px;height:752px;background:#292b2b"></div>
<div class="abs" style="left:369px;top:83px;width:49px;height:752px;background:#2f3335"></div>
<div class="abs" style="left:418px;top:83px;width:1px;height:752px;background:#4e5153"></div>
<div class="abs" style="left:419px;top:101px;width:1000px;height:18px;background:#323232"></div>
<div class="abs" style="left:1123px;top:83px;width:1px;height:752px;background:#474a4b"></div>
<span class="code" style="left:375px;top:85px;color:#606366">1</span>
<span class="code" style="left:375px;top:103px;color:#a4a3a3">2</span>
<span class="code" style="left:423px;top:85px">&lt;?xml version<span class="dim">="1.0"</span> encoding<span class="dim">="utf-8"</span>?&gt;</span>
<span class="code" style="left:423px;top:103px"><span class="hl">&lt;</span>resources<span class="hl">&gt;&lt;/</span>resources<span class="hl">&gt;</span></span>
<span class="ic" style="left:430px;top:85px;width:14px;height:16px;"><svg viewBox="0 0 14 16"><circle cx="7" cy="6" r="5.6" fill="#8f8983"/><rect x="4.5" y="11" width="5" height="2" fill="#8f8983"/><rect x="5" y="13.6" width="4" height="1.3" fill="#c4c4c4"/></svg></span>
<div class="abs" style="left:1407px;top:85px;width:10px;height:10px;background:#85807b"></div>
<div class="abs" style="left:369px;top:835px;width:1050px;height:22px;background:#2f3335"></div>
<div class="abs" style="left:370px;top:835px;width:1049px;height:1px;background:#484b4d"></div>
<span class="s" style="left:428px;top:837px;letter-spacing:0.955px;">resources</span>
<div class="abs" style="left:1043px;top:802px;width:370px;height:47px;background:#4e5253"></div>
<span class="ic" style="left:1054px;top:810px;width:14px;height:14px;"><svg viewBox="0 0 15 15"><circle cx="7.5" cy="7.5" r="7" fill="#3574dc"/><rect x="6.6" y="6.4" width="1.9" height="5.2" fill="#3f4345"/><circle cx="7.5" cy="4.2" r="1.15" fill="#3f4345"/></svg></span>
<span class="t b" style="left:1075px;top:807px;font-size:13px;letter-spacing:0.782px;">Android Studio 4.1 available</span>
<span class="t" style="left:1075px;top:823px;color:#3573d9;font-size:13px;letter-spacing:0.748px;">Update...</span>
<div class="abs" style="left:1419px;top:29px;width:1px;height:828px;background:#323537"></div>
<div class="abs" style="left:0;top:857px;width:1440px;height:1px;background:#323537"></div>
<div class="abs" style="left:0;top:878px;width:1440px;height:1px;background:#424547"></div>
<span class="ic" style="left:31px;top:861px;width:14px;height:14px;"><svg viewBox="0 0 14 14"><rect x="0.6" y="1.6" width="12" height="10.8" fill="#afb1b3"/><path d="M2.6 4l3 2.6-3 2.6M7 10h4" stroke="#3c3f41" stroke-width="1.2" fill="none"/></svg></span>
<span class="s" style="left:49px;top:858px;letter-spacing:0.523px;">Terminal</span>
<span class="ic" style="left:117px;top:861px;width:14px;height:14px;"><svg viewBox="0 0 14 14"><path d="M1 4.2L5 1l3.2 1.6-1.6 2L13.4 11.2 11.6 13 5 6.4 3.6 7.6z" fill="#afb1b3"/></svg></span>
<span class="s" style="left:134.5px;top:858px;letter-spacing:0.184px;">Build</span>
<span class="ic" style="left:183px;top:861px;width:14px;height:14px;"><svg viewBox="0 0 14 14"><path d="M0.5 3h12M0.5 7h8M0.5 11h10" stroke="#afb1b3" stroke-width="1.8"/></svg></span>
<span class="s" style="left:200px;top:858px;letter-spacing:0.698px;"><u>6</u>: Logcat</span>
<span class="ic" style="left:274px;top:861px;width:14px;height:14px;"><svg viewBox="0 0 14 14"><path d="M4.5 3.2h8M4.5 7h8M4.5 10.8h8" stroke="#afb1b3" stroke-width="1.7"/><path d="M1.2 3.2h2M1.2 7h2M1.2 10.8h2" stroke="#afb1b3" stroke-width="1.7"/></svg></span>
<span class="s" style="left:291.5px;top:858px;letter-spacing:-0.32px;">TODO</span>
<span class="ic" style="left:1198px;top:861px;width:14px;height:14px;"><svg viewBox="0 0 14 14"><rect x="0" y="1" width="13" height="12" rx="4" fill="#4d5153"/><text x="6.5" y="10.8" font-family="Liberation Sans,sans-serif" font-size="10" font-weight="bold" text-anchor="middle" fill="#d0d0d0">1</text></svg></span>
<span class="s" style="left:1215px;top:858px;letter-spacing:0.365px;">Event Log</span>
<span class="ic" style="left:1293px;top:861px;width:14px;height:14px;"><svg viewBox="0 0 14 14"><path d="M0.7 7.5V1h8.6v2" fill="none" stroke="#afb1b3" stroke-width="1.1"/><path d="M3.2 10V3.6h8.6V6" fill="none" stroke="#afb1b3" stroke-width="1.1"/><circle cx="8.6" cy="8.6" r="2.7" fill="none" stroke="#afb1b3" stroke-width="1.2"/><path d="M10.6 10.6l3 3" stroke="#afb1b3" stroke-width="1.4"/></svg></span>
<span class="s" style="left:1311px;top:858px;letter-spacing:0.517px;">Layout Inspector</span>
<span class="ic" style="left:5px;top:883px;width:14px;height:14px;"><svg viewBox="0 0 14 14"><rect x="3.5" y="1.5" width="10" height="9.5" fill="none" stroke="#afb1b3" stroke-width="1"/><path d="M1.5 4v9.5h10" fill="none" stroke="#afb1b3" stroke-width="1"/></svg></span>
<span class="s" style="left:31px;top:880px;letter-spacing:0.576px;">XML tag has empty body</span>
<span class="s" style="left:1218px;top:880px;letter-spacing:0.105px;">2:21</span>
<span class="s" style="left:1254px;top:880px;letter-spacing:0.234px;">LF</span>
<span class="s" style="left:1280px;top:880px;color:#857f78;letter-spacing:0.528px;">UTF-8</span>
<span class="s" style="left:1328px;top:880px;letter-spacing:0.699px;">4 spaces</span>
<span class="ic" style="left:1390px;top:882px;width:14px;height:14px;"><svg viewBox="0 0 14 14"><rect x="3" y="6.5" width="9" height="6" fill="#afb1b3"/><path d="M1.6 6.5V4.2a2.3 2.3 0 0 1 4.6 0v2.3" fill="none" stroke="#afb1b3" stroke-width="1.2"/><rect x="5" y="9.5" width="1.5" height="1.5" fill="#3c3f41"/><rect x="8.5" y="9.5" width="1.5" height="1.5" fill="#3c3f41"/></svg></span>
<span class="ic" style="left:1414px;top:882px;width:16px;height:16px;"><svg viewBox="0 0 15 15"><path d="M4.5 1h6l.8 3.4H3.7z" fill="#afb1b3"/><rect x="1.5" y="4.4" width="12" height="1.5" fill="#afb1b3"/><path d="M3.8 6.5h7.4v3.2a3.7 3.7 0 0 1-7.4 0z" fill="#afb1b3"/><path d="M2.5 14.5c.6-2 2.4-2.4 5-2.4s4.4.4 5 2.400z" fill="#afb1b3"/><circle cx="5.9" cy="8.5" r=".9" fill="#3c3f41"/><circle cx="9.1" cy="8.5" r=".9" fill="#3c3f41"/></svg></span>
</body></html>
